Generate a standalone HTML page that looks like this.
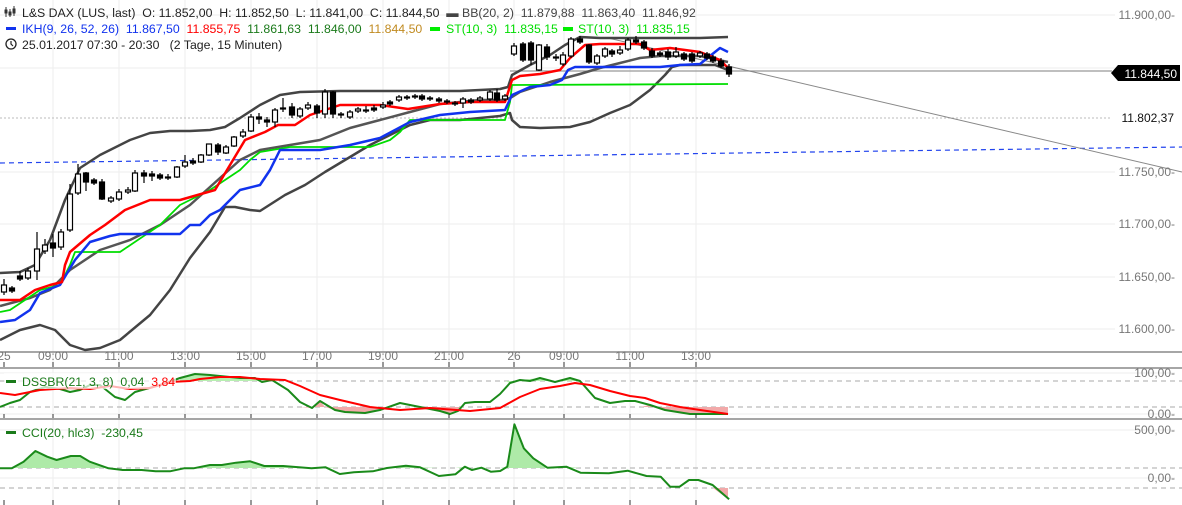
<!DOCTYPE html>
<html><head><meta charset="utf-8"><style>
html,body{margin:0;padding:0;background:#fff;width:1182px;height:505px;overflow:hidden}
svg{display:block;font-family:"Liberation Sans",sans-serif}
.ax{fill:#777;font-size:12px}
</style></head><body>
<svg id="s" width="1182" height="505" viewBox="0 0 1182 505" xmlns="http://www.w3.org/2000/svg">
<g stroke="#eee" stroke-width="1">
<line x1="53" y1="0" x2="53" y2="505"/><line x1="119" y1="0" x2="119" y2="505"/><line x1="185" y1="0" x2="185" y2="505"/><line x1="251" y1="0" x2="251" y2="505"/><line x1="317" y1="0" x2="317" y2="505"/><line x1="383" y1="0" x2="383" y2="505"/><line x1="449" y1="0" x2="449" y2="505"/><line x1="514" y1="0" x2="514" y2="505"/><line x1="564" y1="0" x2="564" y2="505"/><line x1="630" y1="0" x2="630" y2="505"/><line x1="696" y1="0" x2="696" y2="505"/>
<line x1="0" y1="15" x2="1115" y2="15"/><line x1="0" y1="68" x2="1115" y2="68"/><line x1="0" y1="172" x2="1115" y2="172"/><line x1="0" y1="224" x2="1115" y2="224"/><line x1="0" y1="277" x2="1115" y2="277"/><line x1="0" y1="329" x2="1115" y2="329"/>
<line x1="0" y1="373" x2="1175" y2="373"/><line x1="0" y1="414" x2="1175" y2="414"/><line x1="0" y1="430" x2="1175" y2="430"/><line x1="0" y1="478" x2="1175" y2="478"/>
</g>
<g stroke="#888" stroke-width="1.5"><line x1="0" y1="352" x2="1182" y2="352"/><line x1="0" y1="368" x2="1182" y2="368"/><line x1="0" y1="419" x2="1182" y2="419"/></g>
<g stroke="#aaa" stroke-dasharray="5,4" stroke-width="1"><line x1="0" y1="381" x2="1182" y2="381"/><line x1="0" y1="407" x2="1182" y2="407"/><line x1="0" y1="468" x2="1182" y2="468"/><line x1="0" y1="488" x2="1182" y2="488"/></g>
<line x1="0" y1="118" x2="1112" y2="118" stroke="#bbb" stroke-dasharray="2,2"/>
<line x1="0" y1="163" x2="1182" y2="147" stroke="#2244ee" stroke-width="1.2" stroke-dasharray="5,4"/>
<line x1="510" y1="71" x2="1112" y2="71" stroke="#999" stroke-width="1.2"/>
<line x1="608" y1="38" x2="1182" y2="172" stroke="#888" stroke-width="1"/>
<g fill="none" stroke-width="2.5" stroke-linejoin="round">
<polyline stroke="#444" points="0,273 20,272 35,265 50,240 65,200 80,168 100,155 130,140 150,133 170,131 190,131 210,130 225,127 240,118 260,105 280,95 300,92 340,91 380,91 420,91 460,91 500,89 508,87 512,75 530,65 550,55 565,45 580,37 600,38 650,38 700,38 728,37"/>
<polyline stroke="#555" points="0,306 30,298 50,290 70,270 100,250 130,240 160,225 190,205 220,178 240,160 260,150 290,145 320,140 350,128 380,120 410,112 440,104 480,100 505,100 512,97 520,92 550,82 580,74 600,68 620,63 640,58 660,56 700,56 728,62"/>
<polyline stroke="#444" points="0,340 20,330 40,325 55,330 70,345 85,350 100,348 120,340 150,315 170,290 190,258 210,232 225,207 235,207 250,210 260,211 285,195 305,185 325,172 345,160 370,145 390,135 410,125 430,120 460,120 500,116 510,113 512,120 520,127 540,128 570,127 590,122 610,113 630,105 650,90 665,75 672,67 680,65 715,65 728,70"/>
<polyline stroke="#00dd00" stroke-width="1.8" points="0,312 10,310 25,300 40,290 60,285 70,265 75,252 120,252 160,225 180,205 210,190 240,170 250,160 260,152 290,147 370,147 390,140 400,132 410,120 505,120 510,102 512,85 728,84"/>
<polyline stroke="#1133ee" points="0,322 15,320 30,310 40,293 60,285 75,260 90,242 110,236 120,234 180,234 190,225 200,225 210,215 220,210 240,190 260,185 270,170 280,150 290,150 320,150 350,145 380,138 410,122 440,115 470,112 505,110 512,95 530,87 550,85 562,80 568,70 575,67 660,67 680,65 700,64 715,52 720,48 728,52"/>
<polyline stroke="#ff0000" points="0,300 20,300 35,290 50,285 62,282 65,265 70,252 90,235 105,225 125,210 150,200 180,200 215,190 230,165 245,140 265,132 278,125 295,125 310,115 325,110 340,105 380,105 408,109 440,104 470,102 505,102 512,80 520,76 540,74 560,70 570,58 585,45 600,44 640,44 650,50 670,48 700,52 720,60 728,68"/>
</g>
<g id="candles" stroke="#000" stroke-width="1.2"></g>
<polygon fill="#b6efb0" points="180,381 180,378 195,374 210,375 240,378 255,378 258,381"/>
<polygon fill="#b6efb0" points="505,381 510,383 520,380 540,378 555,382 570,378 580,381"/>
<polygon fill="#f2a9a9" points="300,407 312,408 320,401 325,407 335,410 345,412 365,413 380,410 390,407"/>
<polygon fill="#f2a9a9" points="418,407 440,411 450,414 458,411 462,407"/>
<polygon fill="#f2a9a9" points="640,407 650,405 665,410 690,414 728,414 728,407"/>
<g fill="none" stroke-width="2" stroke-linejoin="round">
<polyline stroke="#1a8a1a" points="0,407 10,403 20,400 30,392 45,387 60,389 70,392 80,390 90,385 100,385 115,397 125,400 135,392 160,385 180,378 195,374 210,375 220,376 240,378 255,378 262,382 272,380 288,390 300,402 312,408 320,401 335,410 345,412 365,413 380,410 400,403 420,407 440,411 450,414 458,411 465,403 475,402 490,402 500,394 510,383 520,380 530,381 540,378 555,382 570,378 580,381 595,398 610,403 625,401 635,401 650,405 665,410 690,414 728,414"/>
<polyline stroke="#ff0000" points="0,393 15,395 40,390 70,388 90,389 110,386 130,389 150,388 170,382 190,381 200,379 220,377 240,377 260,379 285,380 300,386 320,395 340,400 370,407 400,410 430,408 470,411 500,408 520,397 540,389 560,386 575,383 590,385 610,391 630,396 645,398 660,403 680,407 700,410 728,414"/>
</g>
<rect x="4" y="373" width="172" height="16" fill="#fff" opacity="0.7"/>
<polygon id="ccif" fill="#aeeaa8"/>
<polygon fill="#f2a9a9" points="713,488 728,499 728,488"/>
<polyline id="cci" fill="none" stroke="#1a8a1a" stroke-width="2" stroke-linejoin="round"/>
<g id="ticks" stroke="#333" stroke-width="1"></g>
<g class="ax" text-anchor="end">
<text x="1175" y="19">11.900,00-</text>
<text x="1175" y="176">11.750,00-</text>
<text x="1175" y="228">11.700,00-</text>
<text x="1175" y="281">11.650,00-</text>
<text x="1175" y="333">11.600,00-</text>
<text x="1175" y="377">100,00-</text>
<text x="1175" y="418">0,00-</text>
<text x="1175" y="434">500,00-</text>
<text x="1175" y="482">0,00-</text>
<text x="1174" y="122" fill="#111">11.802,37</text>
</g>
<path d="M1111,73 L1118,65 L1180,65 L1180,81 L1118,81 Z" fill="#000"/>
<text x="1177" y="78" text-anchor="end" fill="#fff" font-size="12">11.844,50</text>
<g class="ax" text-anchor="middle">
<text x="4" y="360">25</text><text x="53" y="360">09:00</text><text x="119" y="360">11:00</text><text x="185" y="360">13:00</text><text x="251" y="360">15:00</text><text x="317" y="360">17:00</text><text x="383" y="360">19:00</text><text x="449" y="360">21:00</text><text x="514" y="360">26</text><text x="564" y="360">09:00</text><text x="630" y="360">11:00</text><text x="696" y="360">13:00</text>
</g>
<g font-size="12.3">
<rect x="6" y="380" width="10" height="3" fill="#1a7a1a"/>
<text x="22" y="386" fill="#1a7a1a" xml:space="preserve">DSSBR(21, 3, 8)  0,04  <tspan fill="#ff0000">3,84</tspan></text>
<rect x="6" y="431" width="10" height="3" fill="#1a7a1a"/>
<text x="22" y="437" fill="#1a7a1a" xml:space="preserve">CCI(20, hlc3)  -230,45</text>
<g fill="#333" stroke="#333"><line x1="6" y1="7" x2="6" y2="17"/><line x1="10" y1="9" x2="10" y2="17"/><line x1="14" y1="6" x2="14" y2="16"/><rect x="5" y="10" width="2" height="3"/><rect x="9" y="12" width="2" height="3"/><rect x="13" y="9" width="2" height="4"/></g>
<text x="22" y="17" fill="#222" xml:space="preserve">L&amp;S DAX (LUS, last)  O: 11.852,00  H: 11.852,50  L: 11.841,00  C: 11.844,50  <tspan fill="#444">▬</tspan> <tspan fill="#444">BB(20, 2)  11.879,88  11.863,40  11.846,92</tspan></text>
<rect x="6" y="27" width="10" height="3" fill="#1133ee"/>
<text x="22" y="33" fill="#1133ee" xml:space="preserve">IKH(9, 26, 52, 26)  11.867,50  <tspan fill="#ff0000">11.855,75</tspan>  <tspan fill="#1a7a1a">11.861,63</tspan>  <tspan fill="#1a7a1a">11.846,00</tspan>  <tspan fill="#c08a20">11.844,50</tspan></text>
<rect x="430" y="27" width="10" height="4" fill="#00ee00"/>
<text x="446" y="33" fill="#00dd00" xml:space="preserve">ST(10, 3)  11.835,15</text>
<rect x="563" y="27" width="10" height="4" fill="#00ee00"/>
<text x="578" y="33" fill="#00dd00" xml:space="preserve">ST(10, 3)  11.835,15</text>
<circle cx="11" cy="44" r="5" fill="none" stroke="#222" stroke-width="1.3"/><path d="M11,41 L11,44 L13,46" fill="none" stroke="#222" stroke-width="1.2"/>
<text x="22" y="49" fill="#222" xml:space="preserve">25.01.2017 07:30 - 20:30   (2 Tage, 15 Minuten)</text>
</g>
<script>
var NS='http://www.w3.org/2000/svg';
function el(parent,tag,attrs){var e=document.createElementNS(NS,tag);for(var k in attrs)e.setAttribute(k,attrs[k]);parent.appendChild(e);return e;}
var c=[[4,285,292,279,295,0],[12,288,291,286,293,1],[20,276,279,271,281,1],[28,271,278,268,280,0],[37,249,271,232,280,0],[45,245,251,239,254,0],[53,243,248,234,257,1],[61,232,247,229,250,0],[70,194,230,184,232,0],[78,174,193,164,195,0],[86,173,182,172,191,1],[94,180,183,178,185,1],[102,182,199,179,200,1],[111,198,201,196,203,0],[119,192,199,189,201,0],[128,190,192,187,194,0],[135,173,191,170,192,0],[144,173,176,170,183,1],[152,174,176,171,181,1],[160,175,178,173,180,1],[168,177,177,174,180,1],[177,167,177,166,178,0],[185,162,166,155,168,0],[193,161,163,158,165,1],[201,155,162,154,163,0],[209,144,155,144,156,0],[218,145,152,143,155,1],[226,147,153,145,154,0],[234,137,146,136,147,0],[243,132,136,129,138,0],[251,117,131,114,132,0],[259,117,119,113,124,1],[267,120,122,117,127,1],[275,110,122,108,127,0],[283,108,109,98,112,1],[292,107,115,103,118,1],[300,109,116,107,118,0],[308,105,108,102,110,0],[317,106,113,104,118,1],[325,92,114,89,118,0],[333,92,114,91,118,1],[341,114,114,112,118,1],[350,112,117,110,119,0],[358,109,111,107,113,0],[366,110,111,106,113,0],[374,108,110,105,112,1],[383,105,107,102,109,0],[390,102,104,100,106,1],[399,97,100,95,102,0],[407,97,98,95,100,1],[415,96,97,94,99,1],[422,96,99,94,101,1],[430,98,99,96,101,1],[439,99,101,97,103,1],[447,101,102,99,104,1],[455,103,104,101,106,1],[463,99,103,97,108,0],[471,100,102,98,104,1],[480,98,100,96,102,0],[490,92,99,90,101,0],[497,93,100,89,102,1],[505,96,99,94,101,0],[514,46,54,43,56,0],[523,44,60,42,62,1],[531,43,60,41,65,1],[539,45,70,44,71,0],[547,47,57,44,60,1],[556,57,58,54,61,1],[563,55,64,52,66,0],[571,39,56,37,58,0],[580,39,42,36,44,1],[589,45,62,44,64,1],[597,56,63,54,65,0],[605,49,56,47,58,0],[612,51,54,49,57,1],[620,50,53,46,55,0],[628,40,49,38,51,0],[636,40,42,36,44,1],[644,42,48,40,50,1],[652,51,56,48,58,1],[660,53,55,51,57,1],[668,52,57,49,60,1],[676,52,56,47,58,0],[684,54,59,52,61,1],[692,54,61,52,63,1],[700,53,56,51,58,0],[707,54,58,52,60,1],[713,57,61,55,63,1],[721,61,66,58,68,1],[729,67,74,64,77,1]];
var g=document.getElementById('candles');
c.forEach(function(k){var x=k[0],t=k[1],b=k[2];el(g,'line',{x1:x,y1:k[3],x2:x,y2:k[4]});el(g,'rect',{x:x-2.5,y:t,width:5,height:Math.max(b-t,1),fill:k[5]?'#000':'#fff'});});
var S=2.119;
var z=[[0,385],[25,385],[50,365],[75,333],[100,350],[120,360],[150,348],[170,348],[190,365],[230,385],[260,390],[300,390],[330,394],[360,394],[390,385],[410,385],[445,375],[470,375],[500,368],[530,364],[560,378],[600,378],[660,385],[690,382],[720,402],[750,397],[790,394],[820,384],[860,377],[890,382],[930,408],[965,403],[985,380],[1000,390],[1020,383],[1040,395],[1060,393],[1075,380],[1090,253],[1110,325],[1130,355],[1160,383],[1200,380],[1230,398],[1290,400],[1330,392],[1370,408],[1400,410],[1420,440],[1440,440],[1460,420],[1480,420],[1510,435],[1545,478]];
var p=z.map(function(a){return (a[0]/S).toFixed(1)+','+(340+a[1]/3).toFixed(1)}).join(' ');
document.getElementById('cci').setAttribute('points',p);
var zf=z.filter(function(a){return a[0]<=1230});
var f=zf.map(function(a){return (a[0]/S).toFixed(1)+','+Math.min(340+a[1]/3,468).toFixed(1)}).join(' ');
document.getElementById('ccif').setAttribute('points','0,468 '+f+' '+(1230/S).toFixed(1)+',468');
var xs=[4,53,119,185,251,317,383,449,514,564,630,696],tg=document.getElementById('ticks');
xs.forEach(function(x){el(tg,'line',{x1:x,y1:362,x2:x,y2:367});el(tg,'line',{x1:x,y1:414,x2:x,y2:418});el(tg,'line',{x1:x,y1:500,x2:x,y2:505});});
</script>
</svg>
</body></html>
